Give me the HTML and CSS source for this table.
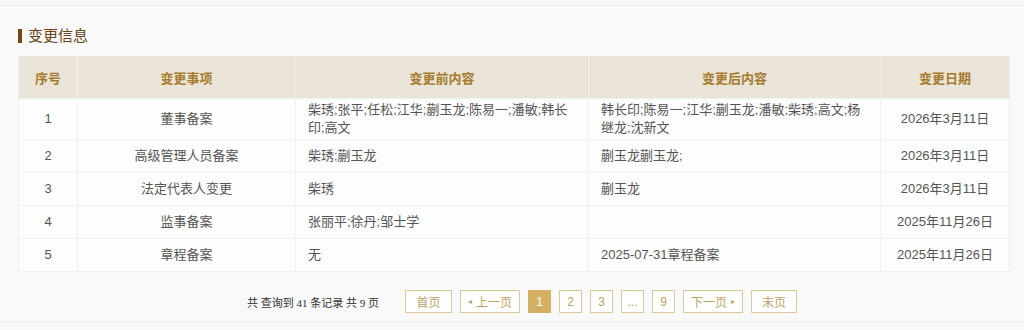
FILE: index.html
```html
<!DOCTYPE html>
<html lang="zh">
<head>
<meta charset="utf-8">
<link rel="stylesheet" href="styles.css">
</head>
<body>
<div class="page">
  <div class="title"><span class="bar"></span><span class="title-text">变更信息</span></div>
  <table class="tbl">
    <colgroup>
      <col class="c1"><col class="c2"><col class="c3"><col class="c4"><col class="c5">
    </colgroup>
    <thead>
      <tr><th>序号</th><th>变更事项</th><th>变更前内容</th><th>变更后内容</th><th>变更日期</th></tr>
    </thead>
    <tbody>
      <tr><td class="ctr">1</td><td class="ctr">董事备案</td><td>柴琇;张平;任松;江华;蒯玉龙;陈易一;潘敏;韩长印;高文</td><td>韩长印;陈易一;江华;蒯玉龙;潘敏;柴琇;高文;杨继龙;沈新文</td><td class="ctr">2026年3月11日</td></tr>
      <tr><td class="ctr">2</td><td class="ctr">高级管理人员备案</td><td>柴琇;蒯玉龙</td><td>蒯玉龙蒯玉龙;</td><td class="ctr">2026年3月11日</td></tr>
      <tr><td class="ctr">3</td><td class="ctr">法定代表人变更</td><td>柴琇</td><td>蒯玉龙</td><td class="ctr">2026年3月11日</td></tr>
      <tr><td class="ctr">4</td><td class="ctr">监事备案</td><td>张丽平;徐丹;邹士学</td><td></td><td class="ctr">2025年11月26日</td></tr>
      <tr><td class="ctr">5</td><td class="ctr">章程备案</td><td>无</td><td>2025-07-31章程备案</td><td class="ctr">2025年11月26日</td></tr>
    </tbody>
  </table>
  <div class="pager">
    <span class="summary">共 查询到 41 条记录 共 9 页</span>
    <div class="btns">
      <span class="btn w47">首页</span>
      <span class="btn w60"><span class="tri">◂</span>上一页</span>
      <span class="btn num active">1</span>
      <span class="btn num">2</span>
      <span class="btn num">3</span>
      <span class="btn num">...</span>
      <span class="btn num">9</span>
      <span class="btn w60">下一页<span class="tri r">▸</span></span>
      <span class="btn w46">末页</span>
    </div>
  </div>
</div>
</body>
</html>
```
FILE: styles.css
```css
html, body { margin: 0; padding: 0; background: #f9f9f9; }
body { font-family: "Liberation Sans", "Noto Sans CJK SC", sans-serif; color: #555; }
.page {
  margin-top: 5px;
  border-top: 1px solid #efefef;
  border-bottom: 1px solid #efefef;
  height: 317px;
  box-sizing: border-box;
  padding: 22px 15px 0 18px;
}
.title { display: flex; align-items: center; height: 16px; }
.bar { width: 4px; height: 14px; background: #7a4510; margin-right: 6px; }
.title-text { font-size: 15px; color: #6a4418; line-height: 16px; }
.tbl {
  margin-top: 12px;
  width: 991px;
  border-collapse: collapse;
  table-layout: fixed;
  font-size: 13px;
}
.c1 { width: 59px; } .c2 { width: 218px; } .c3 { width: 293px; } .c4 { width: 292px; } .c5 { width: 129px; }
.tbl th {
  background: #ebe4d8;
  color: #a47b2c;
  font-weight: bold;
  height: 42px;
  padding: 0;
  border-left: 1px solid #f3efe7;
  border-right: 1px solid #f3efe7;
  text-align: center;
}
.tbl td {
  background: #fdfdfd;
  height: 28px;
  padding: 2px 12px;
  line-height: 18px;
  border: 1px solid #f0f0f0;
  vertical-align: middle;
  color: #555;
}
.tbl td.ctr { text-align: center; }
.pager {
  display: flex;
  align-items: center;
  margin-top: 18px;
  padding-left: 229px;
}
.summary {
  font-family: "Liberation Serif", "Noto Sans CJK SC", serif;
  font-size: 11px;
  color: #333;
  margin-right: 26px;
}
.btns { display: flex; gap: 8px; }
.btn {
  box-sizing: border-box;
  height: 23px;
  border: 1px solid #dcc898;
  background: #fff;
  color: #bfa162;
  font-size: 12px;
  display: flex;
  align-items: center;
  justify-content: center;
}
.num { width: 23px; }
.w47 { width: 47px; }
.w46 { width: 46px; }
.w60 { width: 60px; }
.active { background: #d3b064; color: #fff; border-color: #d3b064; }
.tri { font-size: 8px; margin-right: 4px; }
.tri.r { margin-right: 0; margin-left: 4px; }
```
